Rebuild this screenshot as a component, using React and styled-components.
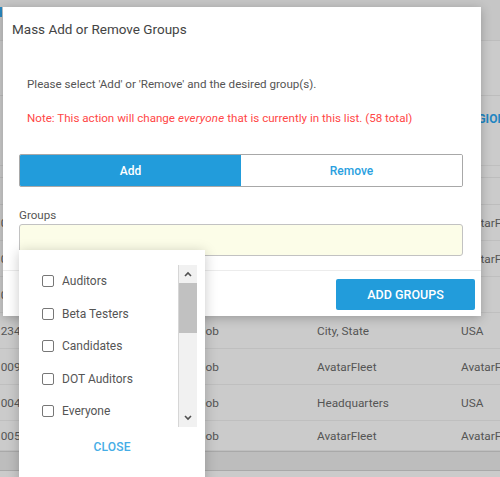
import React from 'react';
import styled, { createGlobalStyle } from 'styled-components';

const GlobalStyle = createGlobalStyle`
  html, body {
    margin: 0;
    padding: 0;
    overflow: hidden;
  }
  body {
    font-family: Roboto, "Liberation Sans", Arial, sans-serif;
  }
`;

const rows = [
  ['10000', 'Job', 'AvatarFleet', 'AvatarFleet'],
  ['10000', 'Job', 'AvatarFleet', 'AvatarFleet'],
  ['10001', 'Job', 'City, State', '.'],
  ['1234', 'Job', 'City, State', 'USA'],
  ['10093', 'Job', 'AvatarFleet', 'AvatarFleet'],
  ['1004', 'Job', 'Headquarters', 'USA'],
  ['10052', 'Job', 'AvatarFleet', 'AvatarFleet'],
];

const groups = ['Auditors', 'Beta Testers', 'Candidates', 'DOT Auditors', 'Everyone'];

const Page = styled.div`
  position: relative;
  width: 500px;
  height: 477px;
  overflow: hidden;
  background: #cbcbcb;
  color: #555;
  font-size: 11.8px;
`;

const Toolbar = styled.div`
  height: 40px;
  border-bottom: 1px solid #bdbdbd;
  background: #c6c6c6;
  display: flex;
  align-items: center;
`;

const ToolIcon = styled.span`
  width: 10px;
  height: 10px;
  margin-left: -8px;
  margin-top: -16px;
  background: #2a8ac2;
`;

const Band = styled.div`
  height: ${(p) => p.h}px;
  border-bottom: 1px solid #bdbdbd;
`;

const Grid = styled.div`
  display: grid;
  grid-template-columns: 205px 118px 144px 100px;
  margin-left: -6px;
  height: ${(p) => p.h}px;
  align-items: center;
  border-bottom: 1px solid ${(p) => p.line || '#bfbfbf'};
  white-space: nowrap;
`;

const HeadCell = styled.div`
  align-self: start;
  padding-top: 16px;
  color: #1f86c2;
  font-weight: 700;
  font-size: 12px;
  text-transform: uppercase;
  margin-left: 2px;
`;

const HScroll = styled.div`
  height: 18px;
  background: #bdbdbd;
  border-top: 1px solid #a9a9a9;
  border-bottom: 1px solid #a9a9a9;
`;

const Modal = styled.div`
  position: absolute;
  left: 3px;
  top: 7px;
  width: 478px;
  height: 309px;
  background: #fff;
  box-shadow: 0 2px 10px rgba(0, 0, 0, 0.25);
  display: flex;
  flex-direction: column;
`;

const Title = styled.h2`
  margin: 0;
  padding: 14px 9px 0;
  font-size: 13.5px;
  font-weight: 400;
  color: #444;
  height: 48px;
  box-sizing: border-box;
`;

const Body = styled.div`
  padding: 0 18px 0 16px;
  flex: 1;
`;

const Text = styled.p`
  margin: 0;
  padding-left: 8px;
  font-size: 11.6px;
  line-height: 14px;
  color: ${(p) => (p.warn ? '#ff4747' : '#555')};
  & + & {
    margin-top: 20px;
  }
  em {
    letter-spacing: 0.2px;
  }
`;

const Messages = styled.div`
  padding-top: 22px;
`;

const Toggle = styled.div`
  display: flex;
  margin-top: 29px;
  height: 31px;
  border: 1px solid #a8a8a8;
  border-radius: 2px;
  overflow: hidden;
`;

const ToggleButton = styled.button`
  flex: 1;
  border: 0;
  font-family: inherit;
  font-size: 12px;
  font-weight: 500;
  background: ${(p) => (p.active ? '#229cdb' : '#fff')};
  color: ${(p) => (p.active ? '#fff' : '#2a9fe0')};
`;

const Label = styled.div`
  margin-top: 21px;
  font-size: 11.6px;
  color: #555;
  line-height: 14px;
`;

const Input = styled.div`
  margin-top: 2px;
  height: 30px;
  background: #fcfde8;
  border: 1px solid #c2c2c2;
  border-radius: 3px;
`;

const Footer = styled.div`
  border-top: 1px solid #ececec;
  height: 46px;
  display: flex;
  justify-content: flex-end;
  align-items: flex-start;
  padding: 8px 6px 0;
  box-sizing: border-box;
`;

const PrimaryButton = styled.button`
  width: 139px;
  height: 31px;
  border: 0;
  border-radius: 2px;
  background: #229cdb;
  color: #fff;
  font-family: inherit;
  font-size: 12.5px;
  font-weight: 500;
`;

const Dropdown = styled.div`
  position: absolute;
  left: 19px;
  top: 250px;
  width: 186px;
  height: 240px;
  background: #fff;
  box-shadow: 0 2px 12px rgba(0, 0, 0, 0.22);
  padding-top: 15px;
  box-sizing: border-box;
`;

const ListArea = styled.div`
  display: flex;
  height: 162px;
  padding-right: 8px;
`;

const List = styled.ul`
  list-style: none;
  margin: 0;
  padding: 0 0 0 23px;
  flex: 1;
`;

const Item = styled.li`
  height: 32.5px;
  display: flex;
  align-items: center;
  gap: 8px;
  font-size: 12px;
  color: #555;
`;

const Box = styled.span`
  width: 10px;
  height: 10px;
  border: 1px solid #777;
  border-radius: 2px;
`;

const Scrollbar = styled.div`
  width: 18px;
  border-left: 1px solid #d6d6d6;
  background: #f1f1f1;
  display: flex;
  flex-direction: column;
`;

const Arrow = styled.div`
  height: 18px;
  display: flex;
  align-items: center;
  justify-content: center;
  background: #f1f1f1;
`;

const Thumb = styled.div`
  height: 50px;
  background: #c1c1c1;
`;

const Track = styled.div`
  flex: 1;
`;

const Close = styled.div`
  text-align: center;
  margin-top: 13px;
  color: #45ade6;
  font-size: 12px;
  font-weight: 500;
  letter-spacing: 0.2px;
`;

const Chevron = ({ up }) => (
  <svg width="8" height="6" viewBox="0 0 8 6">
    <path
      d={up ? 'M1 5 L4 2 L7 5' : 'M1 1 L4 4 L7 1'}
      fill="none"
      stroke="#505050"
      strokeWidth="1.6"
    />
  </svg>
);

const App = () => (
  <Page>
    <GlobalStyle />
    <Toolbar>
      <ToolIcon />
    </Toolbar>
    <Band h={54} />
    <Grid h={69}>
      <div />
      <div />
      <div />
      <HeadCell>Region</HeadCell>
    </Grid>
    <Band h={11} />
    <Band h={26} />
    {rows.map((r, i) => (
      <Grid key={i} h={i === rows.length - 1 ? 29 : 35}>
        {r.map((c, j) => (
          <div key={j}>{c}</div>
        ))}
      </Grid>
    ))}
    <HScroll />

    <Modal>
      <Title>Mass Add or Remove Groups</Title>
      <Body>
        <Messages>
          <Text>Please select 'Add' or 'Remove' and the desired group(s).</Text>
          <Text warn>
            Note: This action will change <em>everyone</em> that is currently in this list. (58 total)
          </Text>
        </Messages>
        <Toggle>
          <ToggleButton active>Add</ToggleButton>
          <ToggleButton>Remove</ToggleButton>
        </Toggle>
        <Label>Groups</Label>
        <Input />
      </Body>
      <Footer>
        <PrimaryButton>ADD GROUPS</PrimaryButton>
      </Footer>
    </Modal>

    <Dropdown>
      <ListArea>
        <List>
          {groups.map((g) => (
            <Item key={g}>
              <Box />
              {g}
            </Item>
          ))}
        </List>
        <Scrollbar>
          <Arrow>
            <Chevron up />
          </Arrow>
          <Thumb />
          <Track />
          <Arrow>
            <Chevron />
          </Arrow>
        </Scrollbar>
      </ListArea>
      <Close>CLOSE</Close>
    </Dropdown>
  </Page>
);

export default App;
